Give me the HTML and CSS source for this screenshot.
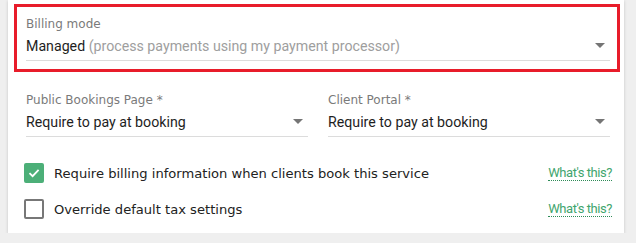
FILE: index.html
```html
<!DOCTYPE html>
<html>
<head>
<meta charset="utf-8">
<link rel="stylesheet" href="styles.css">
</head>
<body>
<div class="card">
  <div class="highlight">
    <div class="field">
      <div class="label">Billing mode</div>
      <div class="select">
        <span class="value">Managed <span class="hint">(process payments using my payment processor)</span></span>
        <span class="arrow"></span>
      </div>
    </div>
  </div>
  <div class="row">
    <div class="field">
      <div class="label">Public Bookings Page *</div>
      <div class="select">
        <span class="value">Require to pay at booking</span>
        <span class="arrow"></span>
      </div>
    </div>
    <div class="field">
      <div class="label">Client Portal *</div>
      <div class="select">
        <span class="value">Require to pay at booking</span>
        <span class="arrow"></span>
      </div>
    </div>
  </div>
  <div class="checks">
    <div class="check">
      <span class="box checked"><svg width="14" height="14" viewBox="0 0 14 14"><path d="M2.5 7.2 L5.6 10.2 L11.6 3.8" fill="none" stroke="#fff" stroke-width="1.8"/></svg></span>
      <span class="check-text">Require billing information when clients book this service</span>
      <a class="help">What's this?</a>
    </div>
    <div class="check">
      <span class="box"></span>
      <span class="check-text">Override default tax settings</span>
      <a class="help">What's this?</a>
    </div>
  </div>
</div>
</body>
</html>
```

FILE: styles.css
```css
html, body {
  margin: 0;
  padding: 0;
  background: #efefef;
}
.card {
  margin-left: 8px;
  width: 616px;
  height: 233px;
  background: #fff;
  box-shadow: 0 1px 3px rgba(0,0,0,0.18);
  padding: 4px 0 0 6px;
  box-sizing: border-box;
}
.highlight {
  width: 606px;
  height: 68px;
  box-sizing: border-box;
  border: 3px solid #e81c2a;
  padding: 0 7px 0 9px;
}
.field {
  display: flex;
  flex-direction: column;
}
.label {
  font-family: "DejaVu Sans", sans-serif;
  font-size: 12px;
  color: #7a7a7a;
  line-height: 14px;
  padding-top: 10px;
}
.select {
  display: flex;
  align-items: center;
  justify-content: space-between;
  height: 30px;
  border-bottom: 1px solid #dcdcdc;
  box-sizing: border-box;
  padding-right: 5px;
}
.value {
  font-family: Roboto, sans-serif;
  font-size: 14.2px;
  color: #1e1e1e;
  padding-top: 1px;
}
.hint {
  color: #9e9e9e;
}
.arrow {
  width: 0;
  height: 0;
  border-left: 5px solid transparent;
  border-right: 5px solid transparent;
  border-top: 5px solid #757575;
}
.row {
  display: grid;
  grid-template-columns: 282px 282px;
  column-gap: 20px;
  padding-left: 12px;
  margin-top: 13px;
}
.row .label {
  padding-top: 8px;
}
.checks {
  display: flex;
  flex-direction: column;
  gap: 16px;
  padding: 26px 12px 0 10px;
}
.check {
  display: flex;
  align-items: center;
  height: 20px;
}
.box {
  width: 20px;
  height: 20px;
  box-sizing: border-box;
  border: 2px solid #777;
  border-radius: 2px;
  display: flex;
  align-items: center;
  justify-content: center;
  margin-right: 10px;
}
.box.checked {
  background: #4caf78;
  border-color: #4caf78;
}
.check-text {
  font-family: "DejaVu Sans", sans-serif;
  font-size: 13.1px;
  color: #222;
  flex: 1;
}
.help {
  font-family: Roboto, sans-serif;
  font-size: 13px;
  color: #3fa56e;
  border-bottom: 1px dotted #2e8b57;
  line-height: 15px;
  letter-spacing: -0.45px;
}
```
